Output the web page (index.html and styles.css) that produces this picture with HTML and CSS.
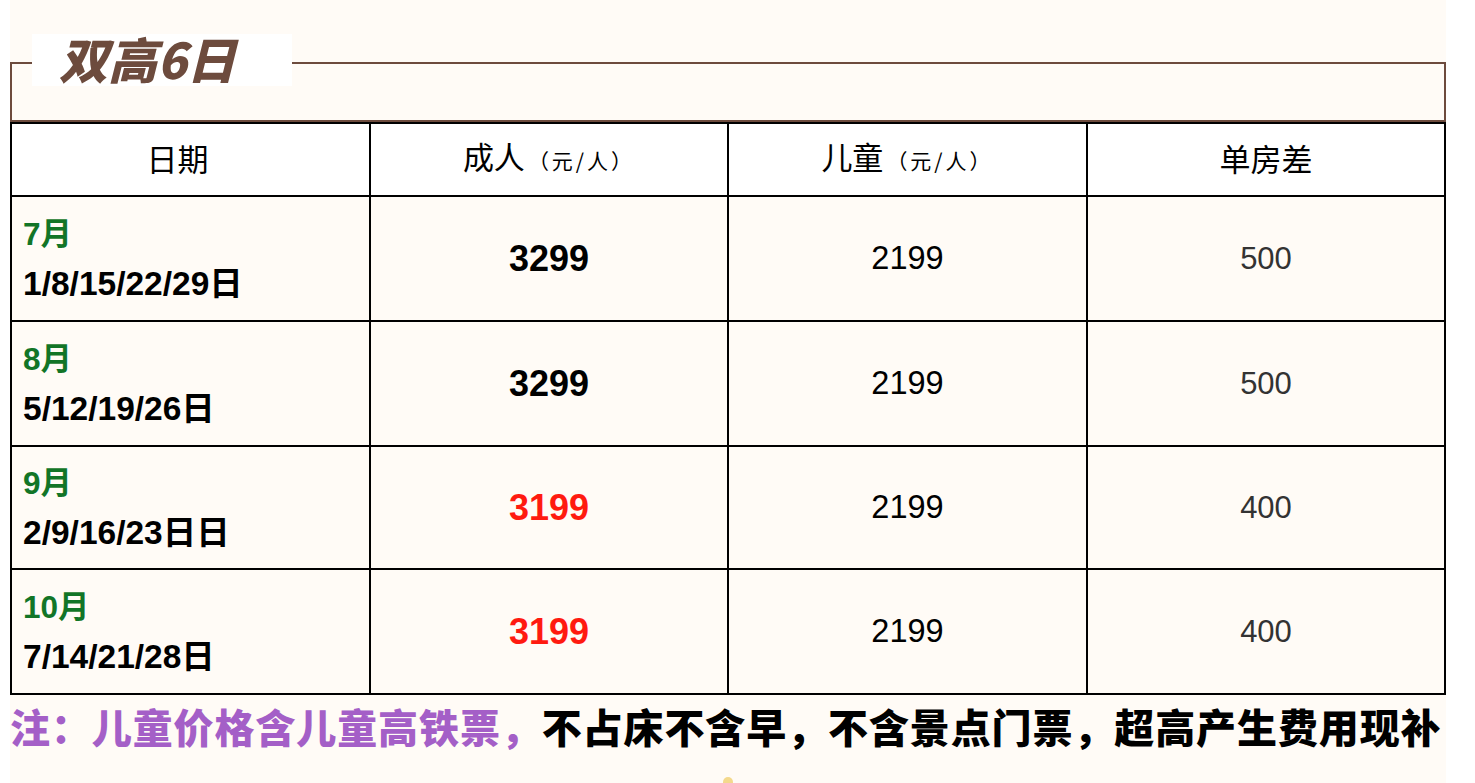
FILE: index.html
```html
<!DOCTYPE html>
<html lang="zh-CN">
<head>
<meta charset="utf-8">
<title>双高6日</title>
<link rel="stylesheet" href="styles.css">
</head>
<body>
<div class="page">
  <div class="frame">
    <div class="title-box"><span class="title">双高6日</span></div>
  </div>
  <div class="grid">
    <div class="cell head head-first"><span>日期</span></div>
    <div class="cell head"><span>成人<span class="unit">（元/人）</span></span></div>
    <div class="cell head"><span>儿童<span class="unit">（元/人）</span></span></div>
    <div class="cell head"><span>单房差</span></div>

    <div class="cell date"><div class="month">7月</div><div class="days">1/8/15/22/29日</div></div>
    <div class="cell adult">3299</div>
    <div class="cell child">2199</div>
    <div class="cell single">500</div>

    <div class="cell date"><div class="month">8月</div><div class="days">5/12/19/26日</div></div>
    <div class="cell adult">3299</div>
    <div class="cell child">2199</div>
    <div class="cell single">500</div>

    <div class="cell date"><div class="month">9月</div><div class="days">2/9/16/23日日</div></div>
    <div class="cell adult red">3199</div>
    <div class="cell child">2199</div>
    <div class="cell single">400</div>

    <div class="cell date"><div class="month">10月</div><div class="days">7/14/21/28日</div></div>
    <div class="cell adult red">3199</div>
    <div class="cell child">2199</div>
    <div class="cell single">400</div>
  </div>
  <p class="note"><span class="purple">注：儿童价格含儿童高铁票，</span>不占床不含早，不含景点门票，超高产生费用现补</p>
  <span class="dot"></span>
</div>
</body>
</html>
```
FILE: styles.css
```css
html, body {
  margin: 0;
  padding: 0;
  background: #ffffff;
}
.page {
  position: relative;
  margin-left: 10px;
  width: 1436px;
  height: 783px;
  padding-top: 62px;
  box-sizing: border-box;
  background: #fffbf6;
  overflow: hidden;
  font-family: "Liberation Sans", "Noto Sans CJK SC", sans-serif;
}
.frame {
  position: relative;
  height: 60px;
  box-sizing: border-box;
  border: 2px solid #6d4b3d;
}
.title-box {
  position: absolute;
  left: 20px;
  top: -30px;
  width: 260px;
  height: 52px;
  background: #ffffff;
  box-sizing: border-box;
  padding-left: 27px;
}
.title {
  font-family: "Noto Sans CJK SC", sans-serif;
  font-size: 49px;
  line-height: 52px;
  font-weight: 900;
  font-style: italic;
  color: #6d4b3d;
  display: block;
  margin-top: -2px;
}
.grid {
  display: grid;
  grid-template-columns: 359px 358px 359px 358px;
  grid-template-rows: 73px 125px 125px 123px 125px;
  border-left: 2px solid #000;
  border-top: 2px solid #000;
}
.cell {
  box-sizing: border-box;
  border-right: 2px solid #000;
  border-bottom: 2px solid #000;
  display: flex;
  align-items: center;
  justify-content: center;
  color: #000;
}
.head {
  background: #ffffff;
  font-family: "Noto Sans CJK SC", sans-serif;
  font-size: 31px;
  line-height: 40px;
  padding-bottom: 4px;
}
.head-first {
  padding-right: 26px;
}
.unit {
  font-size: 21px;
  letter-spacing: 3px;
  margin-left: 3px;
}
.date {
  flex-direction: column;
  align-items: flex-start;
  padding-left: 11px;
}
.month {
  color: #127527;
  font-weight: 700;
  font-size: 31.5px;
  line-height: 50px;
}
.days {
  font-weight: 700;
  font-size: 33.5px;
  line-height: 50px;
}
.adult {
  font-weight: 700;
  font-size: 36px;
}
.red {
  color: #ff1a10;
}
.child {
  font-size: 32.5px;
}
.single {
  font-size: 31px;
  color: #333333;
}
.note {
  margin: 0;
  font-family: "Noto Sans CJK SC", sans-serif;
  font-weight: 900;
  font-size: 40px;
  letter-spacing: 0.9px;
  line-height: 62px;
  color: #000;
  white-space: nowrap;
}
.purple {
  color: #a45fc7;
}
.dot {
  position: absolute;
  left: 713px;
  top: 777px;
  width: 10px;
  height: 10px;
  border-radius: 50%;
  background: #f4d98c;
}
```
